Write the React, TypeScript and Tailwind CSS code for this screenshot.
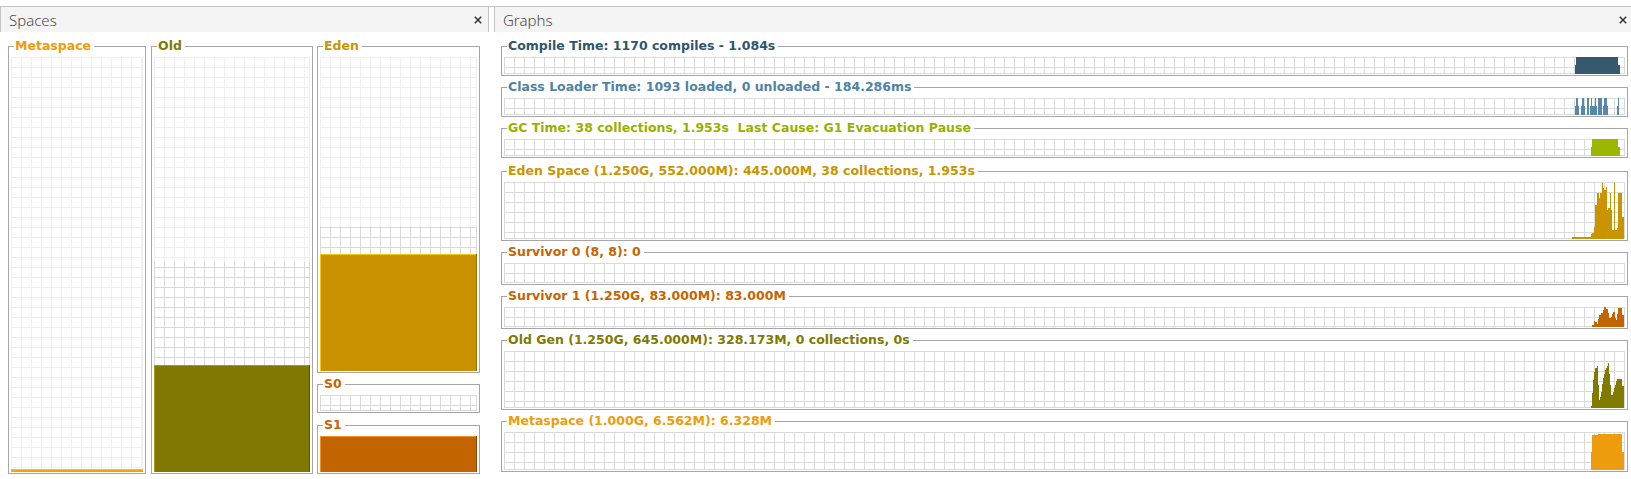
import React from "react";

type Seg = [number, number, number];

const BORDER = "border-[#a6a6a6]";

function TitledBox({
  title,
  titleClass,
  className,
  children,
}: {
  title: string;
  titleClass: string;
  className?: string;
  children: React.ReactNode;
}) {
  return (
    <div className={"flex flex-col " + (className ?? "")}>
      <div className="flex h-[16px] items-end">
        <div className={"h-[8px] w-[6px] shrink-0 border-l border-t " + BORDER} />
        <span
          className={
            "self-start whitespace-pre pl-[1px] pr-[3px] text-[12.5px] font-bold leading-[16px] font-['DejaVu_Sans',sans-serif] " +
            titleClass
          }
        >
          {title}
        </span>
        <div className={"h-[8px] flex-1 border-r border-t " + BORDER} />
      </div>
      <div className={"border-b border-l border-r pb-[1px] pl-[2px] pr-[2px] pt-[3px] " + BORDER}>{children}</div>
    </div>
  );
}

function GridPattern({ id, color }: { id: string; color: string }) {
  return (
    <pattern id={id} width="10" height="10" patternUnits="userSpaceOnUse">
      <rect x="0" y="0" width="10" height="1" fill={color} />
      <rect x="0" y="0" width="1" height="10" fill={color} />
    </pattern>
  );
}

function GraphGrid({
  id,
  h,
  top,
  segs,
  color,
}: {
  id: string;
  h: number;
  top: number;
  segs: Seg[];
  color: string;
}) {
  const w = 1121;
  const ox = 504;
  return (
    <svg width={w} height={h} className="block" shapeRendering="crispEdges">
      <defs>
        <GridPattern id={id} color="#dadada" />
      </defs>
      <rect width={w} height={h} fill="#ffffff" />
      <rect width={w} height={h} fill={`url(#${id})`} />
      <rect x={w - 1} y={0} width={1} height={h} fill="#dadada" />
      <rect x={0} y={h - 1} width={w} height={1} fill="#dadada" />
      {segs.map(([x0, x1, y], i) => (
        <rect key={i} x={x0 - ox} y={y - top} width={x1 - x0} height={h - (y - top)} fill={color} />
      ))}
    </svg>
  );
}

function SpaceGauge({
  id,
  w,
  h,
  committed,
  fillTop,
  fill,
  light,
  dark,
}: {
  id: string;
  w: number;
  h: number;
  committed: number;
  fillTop: number | null;
  fill?: string;
  light?: string;
  dark?: string;
}) {
  return (
    <svg width={w} height={h} className="block" shapeRendering="crispEdges">
      <defs>
        <GridPattern id={id + "l"} color="#efefef" />
        <GridPattern id={id + "d"} color="#d9d9d9" />
      </defs>
      <rect width={w} height={h} fill="#ffffff" />
      <rect width={w} height={h} fill={`url(#${id}l)`} />
      <rect x={w - 1} y={0} width={1} height={h} fill="#efefef" />
      <rect x={0} y={h - 1} width={w} height={1} fill="#efefef" />
      {committed < h && (
        <g>
          <rect x={0} y={committed} width={w} height={h - committed} fill={`url(#${id}d)`} />
          <rect x={w - 1} y={committed} width={1} height={h - committed} fill="#d9d9d9" />
          <rect x={0} y={h - 1} width={w} height={1} fill="#d9d9d9" />
        </g>
      )}
      {fillTop !== null && fill && (
        <g>
          <rect x={0} y={fillTop} width={w} height={h - fillTop} fill={fill} />
          {light && <rect x={0} y={fillTop} width={w} height={1} fill={light} />}
          {light && <rect x={0} y={fillTop} width={1} height={h - fillTop} fill={light} />}
          {dark && <rect x={w - 1} y={fillTop} width={1} height={h - fillTop} fill={dark} />}
        </g>
      )}
    </svg>
  );
}

function CloseIcon() {
  return (
    <svg width="8" height="8" viewBox="0 0 8 8" className="block">
      <path d="M0.8 0.8 L7.2 7.2 M7.2 0.8 L0.8 7.2" stroke="#333333" strokeWidth="1.5" />
    </svg>
  );
}

const compileSegs: Seg[] = [
  [1575, 1620, 65],
  [1576, 1618, 57],
];

const classSegs: Seg[] = [
  [1575, 1579, 106],
  [1576, 1578, 98],
  [1581, 1585, 106],
  [1582, 1584, 98],
  [1587, 1589, 98],
  [1590, 1593, 106],
  [1591, 1592, 98],
  [1593, 1597, 106],
  [1595, 1596, 98],
  [1598, 1602, 98],
  [1603, 1608, 106],
  [1604, 1607, 98],
  [1617, 1619, 106],
  [1618, 1619, 98],
];

const gcSegs: Seg[] = [
  [1591, 1620, 147],
  [1592, 1618, 139],
];

const edenSegs: Seg[] = [
  [1572, 1591, 237],
  [1591, 1592, 234],
  [1592, 1594, 233],
  [1594, 1595, 227],
  [1595, 1597, 205],
  [1597, 1599, 193],
  [1599, 1600, 198],
  [1600, 1602, 193],
  [1602, 1603, 183],
  [1603, 1604, 188],
  [1604, 1606, 190],
  [1606, 1607, 187],
  [1607, 1608, 210],
  [1608, 1610, 208],
  [1610, 1611, 193],
  [1611, 1612, 210],
  [1612, 1614, 230],
  [1614, 1615, 183],
  [1615, 1617, 230],
  [1617, 1618, 228],
  [1618, 1622, 193],
  [1622, 1624, 217],
];

const s1Segs: Seg[] = [
  [1592, 1594, 325],
  [1594, 1595, 321],
  [1595, 1597, 322],
  [1597, 1598, 324],
  [1598, 1599, 319],
  [1599, 1601, 315],
  [1601, 1603, 313],
  [1603, 1604, 310],
  [1604, 1606, 307],
  [1606, 1608, 309],
  [1608, 1609, 313],
  [1609, 1611, 318],
  [1611, 1612, 317],
  [1612, 1613, 314],
  [1613, 1615, 312],
  [1615, 1616, 318],
  [1616, 1617, 320],
  [1617, 1618, 314],
  [1618, 1622, 308],
  [1622, 1624, 315],
];

const oldSegs: Seg[] = [
  [1591, 1592, 406],
  [1592, 1593, 393],
  [1593, 1594, 380],
  [1594, 1595, 372],
  [1595, 1597, 368],
  [1597, 1598, 366],
  [1598, 1599, 385],
  [1599, 1600, 400],
  [1600, 1601, 397],
  [1601, 1602, 392],
  [1602, 1603, 384],
  [1603, 1604, 378],
  [1604, 1605, 374],
  [1605, 1606, 370],
  [1606, 1607, 368],
  [1607, 1608, 366],
  [1608, 1609, 363],
  [1609, 1610, 374],
  [1610, 1611, 385],
  [1611, 1613, 395],
  [1613, 1614, 392],
  [1614, 1615, 388],
  [1615, 1616, 385],
  [1616, 1617, 381],
  [1617, 1622, 379],
  [1622, 1624, 386],
];

const metaSegs: Seg[] = [
  [1591, 1624, 452],
  [1592, 1622, 435],
  [1598, 1622, 434],
];

export default function App() {
  return (
    <div className="h-[479px] w-[1631px] overflow-hidden bg-white pt-[6px] font-['Noto_Sans',sans-serif]">
      <div className="flex border-t border-[#c4c4c4]">
        {/* Spaces panel */}
        <div className="flex w-[489px] shrink-0 flex-col">
          <div className="flex h-[25px] items-center justify-between border-l border-r border-[#c4c4c4] bg-[#f4f4f4] pl-[8px] pr-[6px]">
            <span className="text-[15px] font-light leading-[20px] text-[#4a4a4a]">Spaces</span>
            <CloseIcon />
          </div>
          <div className="flex items-start gap-[5px] pl-[8px] pt-[6px]">
            <TitledBox title="Metaspace" titleClass="text-[#ee9c0c]" className="w-[138px]">
              <SpaceGauge id="sm" w={132} h={415} committed={415} fillTop={412} fill="#f2a400" light="#ffc400" />
            </TitledBox>
            <TitledBox title="Old" titleClass="text-[#7f7a00]" className="w-[162px]">
              <SpaceGauge
                id="so"
                w={156}
                h={415}
                committed={205}
                fillTop={308}
                fill="#807800"
                light="#a39c10"
                dark="#585300"
              />
            </TitledBox>
            <div className="ml-[-1px] flex w-[163px] flex-col">
              <TitledBox title="Eden" titleClass="text-[#c99400]">
                <SpaceGauge
                  id="se"
                  w={157}
                  h={314}
                  committed={169}
                  fillTop={197}
                  fill="#c99100"
                  light="#f7c800"
                  dark="#96700a"
                />
              </TitledBox>
              <TitledBox title="S0" titleClass="text-[#c46500]" className="mt-[3px]">
                <SpaceGauge id="s0" w={157} h={16} committed={0} fillTop={null} />
              </TitledBox>
              <TitledBox title="S1" titleClass="text-[#c46500]" className="mt-[4px]">
                <SpaceGauge
                  id="s1"
                  w={157}
                  h={36}
                  committed={0}
                  fillTop={0}
                  fill="#c26400"
                  light="#f2921e"
                  dark="#8c4a00"
                />
              </TitledBox>
            </div>
          </div>
        </div>

        <div className="w-[5px] shrink-0" />

        {/* Graphs panel */}
        <div className="flex flex-1 flex-col">
          <div className="flex h-[25px] items-center justify-between border-l border-[#c4c4c4] bg-[#f4f4f4] pl-[8px] pr-[4px]">
            <span className="text-[15px] font-light leading-[20px] text-[#4a4a4a]">Graphs</span>
            <CloseIcon />
          </div>
          <div className="flex flex-col pl-[7px] pr-[3px] pt-[6px]">
            <TitledBox title="Compile Time: 1170 compiles - 1.084s" titleClass="text-[#2e566d]">
              <GraphGrid id="g1" h={17} top={57} segs={compileSegs} color="#355a6e" />
            </TitledBox>
            <TitledBox
              title="Class Loader Time: 1093 loaded, 0 unloaded - 184.286ms"
              titleClass="text-[#4e82a6]"
              className="mt-[3px]"
            >
              <GraphGrid id="g2" h={17} top={98} segs={classSegs} color="#5489aa" />
            </TitledBox>
            <TitledBox
              title="GC Time: 38 collections, 1.953s  Last Cause: G1 Evacuation Pause"
              titleClass="text-[#9ab000]"
              className="mt-[3px]"
            >
              <GraphGrid id="g3" h={17} top={139} segs={gcSegs} color="#9db600" />
            </TitledBox>
            <TitledBox
              title="Eden Space (1.250G, 552.000M): 445.000M, 38 collections, 1.953s"
              titleClass="text-[#c99400]"
              className="mt-[5px]"
            >
              <GraphGrid id="g4" h={57} top={182} segs={edenSegs} color="#c99400" />
            </TitledBox>
            <TitledBox title="Survivor 0 (8, 8): 0" titleClass="text-[#c46500]" className="mt-[3px]">
              <GraphGrid id="g5" h={20} top={263} segs={[]} color="#c26500" />
            </TitledBox>
            <TitledBox
              title="Survivor 1 (1.250G, 83.000M): 83.000M"
              titleClass="text-[#c46500]"
              className="mt-[3px]"
            >
              <GraphGrid id="g6" h={20} top={307} segs={s1Segs} color="#c26500" />
            </TitledBox>
            <TitledBox
              title="Old Gen (1.250G, 645.000M): 328.173M, 0 collections, 0s"
              titleClass="text-[#7f7a00]"
              className="mt-[3px]"
            >
              <GraphGrid id="g7" h={57} top={351} segs={oldSegs} color="#807a00" />
            </TitledBox>
            <TitledBox
              title="Metaspace (1.000G, 6.562M): 6.328M"
              titleClass="text-[#ec9c0c]"
              className="mt-[3px]"
            >
              <GraphGrid id="g8" h={38} top={432} segs={metaSegs} color="#ec9c0c" />
            </TitledBox>
          </div>
        </div>
      </div>
    </div>
  );
}
